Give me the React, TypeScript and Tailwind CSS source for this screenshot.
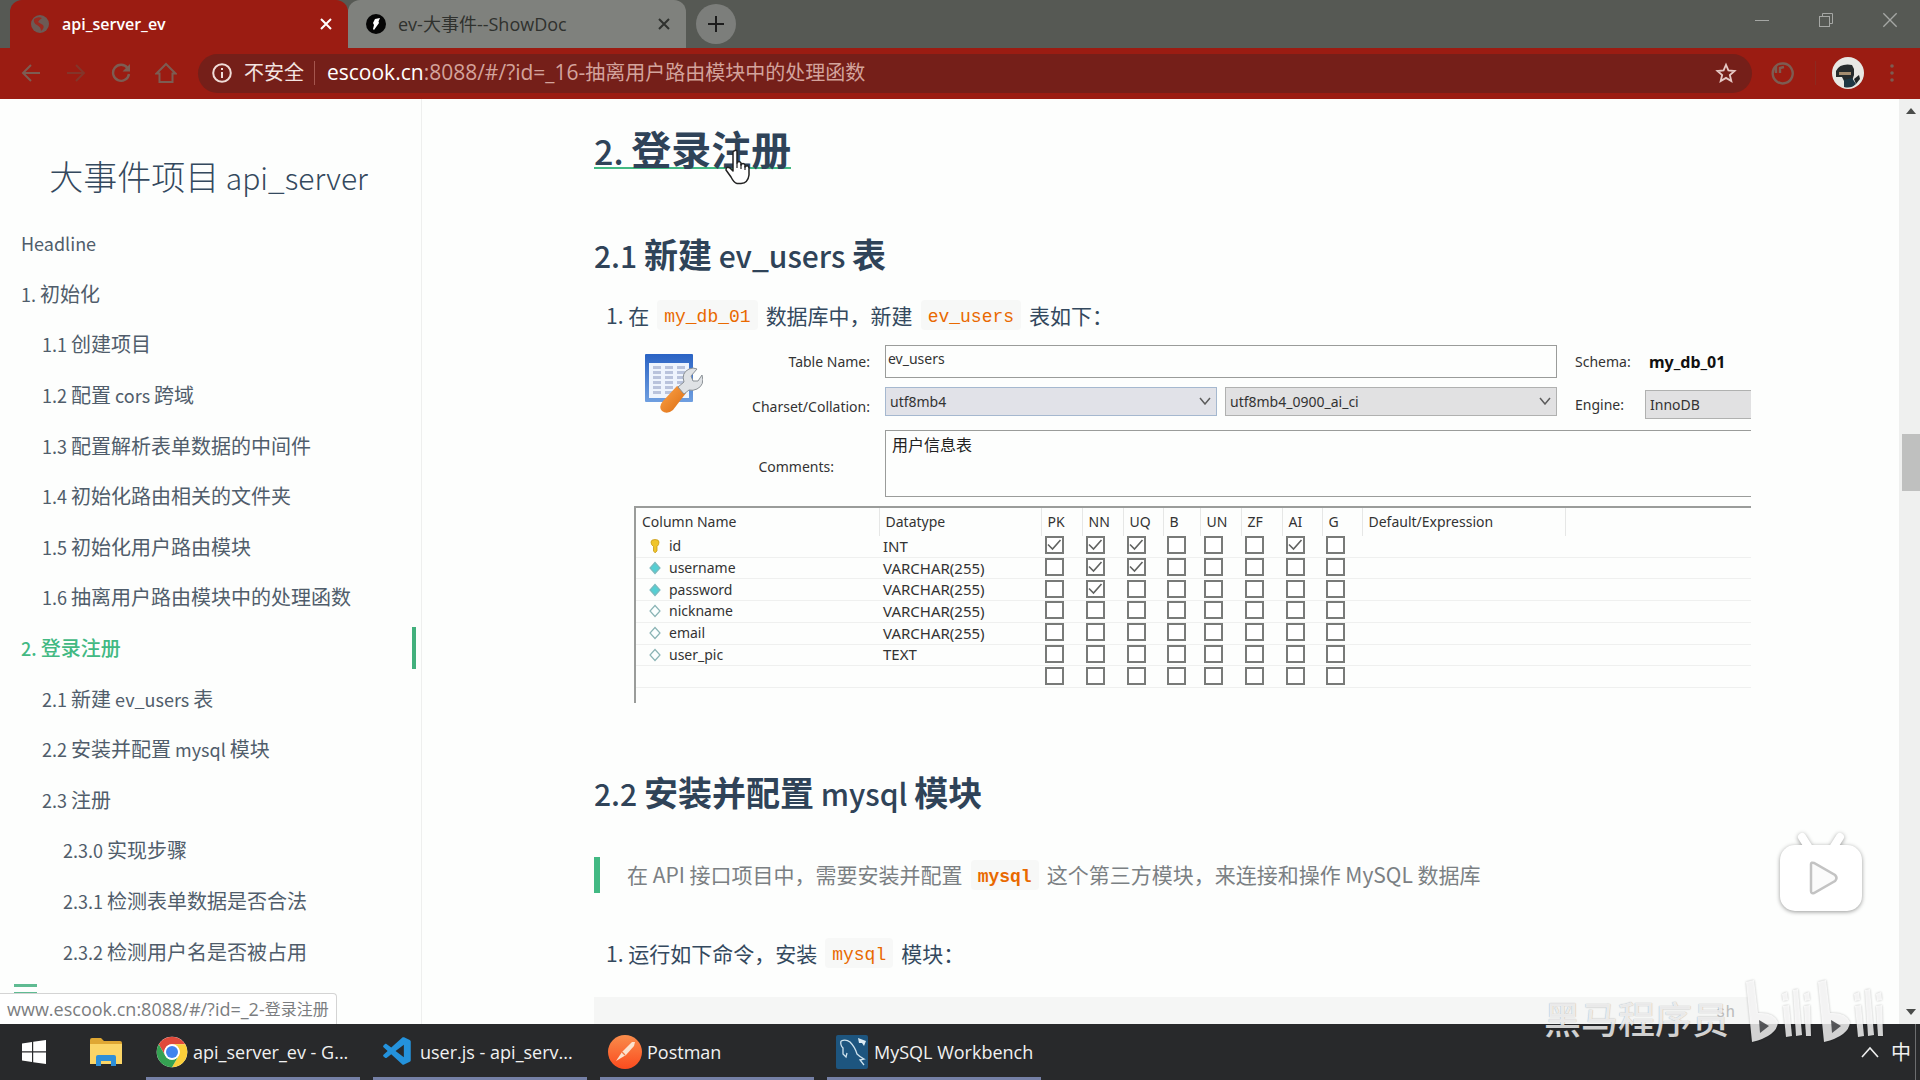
import React from "react";
import { VscVscode } from "react-icons/vsc";

const DOC = "font-['Noto_Sans_CJK_SC',sans-serif]";
const UI = "font-['Open_Sans','Noto_Sans_CJK_SC',sans-serif]";
const TABLE = "font-['Noto_Sans','Noto_Sans_CJK_SC',sans-serif]";

const NAV: { text: string; level: number; active?: boolean }[] = [
  { text: "Headline", level: 0 },
  { text: "1. 初始化", level: 0 },
  { text: "1.1 创建项目", level: 1 },
  { text: "1.2 配置 cors 跨域", level: 1 },
  { text: "1.3 配置解析表单数据的中间件", level: 1 },
  { text: "1.4 初始化路由相关的文件夹", level: 1 },
  { text: "1.5 初始化用户路由模块", level: 1 },
  { text: "1.6 抽离用户路由模块中的处理函数", level: 1 },
  { text: "2. 登录注册", level: 0, active: true },
  { text: "2.1 新建 ev_users 表", level: 1 },
  { text: "2.2 安装并配置 mysql 模块", level: 1 },
  { text: "2.3 注册", level: 1 },
  { text: "2.3.0 实现步骤", level: 2 },
  { text: "2.3.1 检测表单数据是否合法", level: 2 },
  { text: "2.3.2 检测用户名是否被占用", level: 2 },
];

const INDENT = ["pl-[21px]", "pl-[42px]", "pl-[63px]"];

const FLAGS = ["PK", "NN", "UQ", "B", "UN", "ZF", "AI", "G"];

const ROWS: { name: string; type: string; icon: "key" | "full" | "empty" | "none"; on: string[] }[] = [
  { name: "id", type: "INT", icon: "key", on: ["PK", "NN", "UQ", "AI"] },
  { name: "username", type: "VARCHAR(255)", icon: "full", on: ["NN", "UQ"] },
  { name: "password", type: "VARCHAR(255)", icon: "full", on: ["NN"] },
  { name: "nickname", type: "VARCHAR(255)", icon: "empty", on: [] },
  { name: "email", type: "VARCHAR(255)", icon: "empty", on: [] },
  { name: "user_pic", type: "TEXT", icon: "empty", on: [] },
  { name: "", type: "", icon: "none", on: [] },
];

/* Sets the Latin runs of a mixed Chinese/Latin string in their own style. */
function Mixed({ text, latin }: { text: string; latin: string }) {
  return (
    <>
      {text.split(/([\x20-\x7e]+)/).map((part, i) =>
        i % 2 === 1 ? (
          <span key={i} className={latin}>{part}</span>
        ) : (
          part
        )
      )}
    </>
  );
}

function CloseIcon({ className }: { className: string }) {
  return (
    <svg viewBox="0 0 12 12" className={className} fill="none" stroke="currentColor">
      <path d="M1 1 L11 11 M11 1 L1 11" />
    </svg>
  );
}

function TabStrip() {
  return (
    <div className="flex h-12 items-stretch bg-[#565954]">
      <div className="ml-2.5 flex w-[338px] shrink-0 items-center rounded-t-xl bg-[#9b1c12] pl-5 pr-3 text-white">
        <svg viewBox="0 0 20 20" className="size-5 shrink-0">
          <circle cx="10" cy="10" r="9" fill="#6d5a55" />
          <path d="M4 5 Q8 2 12 4 Q9 6 8 8 L13 11 Q15 14 11 17 Q11 13 7 11 Q3 9 4 5Z" fill="#9b2a20" />
        </svg>
        <span className="ml-3 flex-1 text-base font-semibold">api_server_ev</span>
        <button aria-label="关闭 api_server_ev" className="grid size-5 place-items-center">
          <CloseIcon className="size-3 stroke-2" />
        </button>
      </div>
      <div className="flex w-[338px] shrink-0 items-center rounded-t-xl bg-[#7f817d] pl-[18px] pr-3 text-[#2f312e]">
        <svg viewBox="0 0 20 20" className="size-5 shrink-0">
          <circle cx="10" cy="10" r="10" fill="#050505" />
          <path d="M9 5 L14 4 L12.5 7.5 L13 9 L8 16 L7 15 L8 11 L7 9Z" fill="#fff" />
        </svg>
        <span className="ml-3 flex-1 text-lg">ev-大事件--ShowDoc</span>
        <button aria-label="关闭 ShowDoc" className="grid size-5 place-items-center">
          <CloseIcon className="size-3 stroke-2" />
        </button>
      </div>
      <button aria-label="新标签页" className="mx-2.5 mt-1 grid size-10 place-items-center rounded-full bg-[#7c7e7b] text-[#1c1c1c]">
        <svg viewBox="0 0 16 16" className="size-4" stroke="currentColor" strokeWidth="2">
          <path d="M8 0 V16 M0 8 H16" />
        </svg>
      </button>
      <div className="-mr-0.5 ml-auto flex items-start pt-2.5 text-[#a5a7a4]">
        <button aria-label="最小化" className="grid h-5 w-16 place-items-center">
          <svg viewBox="0 0 14 14" className="size-3.5" stroke="currentColor" fill="none">
            <path d="M0 7.5 H14" />
          </svg>
        </button>
        <button aria-label="还原" className="grid h-5 w-16 place-items-center">
          <svg viewBox="0 0 16 16" className="size-4" stroke="currentColor" fill="none">
            <rect x="1.5" y="4.5" width="10" height="10" />
            <path d="M4.5 4.5 V1.5 H14.5 V11.5 H11.5" />
          </svg>
        </button>
        <button aria-label="关闭" className="grid h-5 w-16 place-items-center">
          <CloseIcon className="size-4" />
        </button>
      </div>
    </div>
  );
}

function Toolbar() {
  const nav = "grid size-6 place-items-center";
  return (
    <div className="flex h-[51px] items-center bg-[#9b1c12] pb-px text-[#7d5c52]">
      <div className="flex w-[198px] shrink-0 items-center gap-[21px] pl-[19px]">
        <button aria-label="后退" className={nav}>
          <svg viewBox="0 0 20 20" className="size-5" fill="none" stroke="currentColor" strokeWidth="2">
            <path d="M19 10 H2 M10 2 L2 10 L10 18" />
          </svg>
        </button>
        <button aria-label="前进" className={`${nav} text-[#84352a]`}>
          <svg viewBox="0 0 20 20" className="size-5" fill="none" stroke="currentColor" strokeWidth="2">
            <path d="M1 10 H18 M10 2 L18 10 L10 18" />
          </svg>
        </button>
        <button aria-label="刷新" className={nav}>
          <svg viewBox="0 0 20 20" className="size-5" fill="none" stroke="currentColor" strokeWidth="2.4">
            <path d="M16.5 5 A8 8 0 1 0 18 11" />
            <path d="M19 1 V8.5 H11.5Z" fill="currentColor" stroke="none" />
          </svg>
        </button>
        <button aria-label="主页" className={nav}>
          <svg viewBox="0 0 22 22" className="size-[22px]" fill="none" stroke="currentColor" strokeWidth="2">
            <path d="M1.5 11.5 L11 2 L20.5 11.5 H17.5 V20 H4.5 V11.5Z" />
          </svg>
        </button>
      </div>
      <div className="flex h-[39px] min-w-0 flex-1 items-center rounded-full bg-[#751f19] pl-3.5 pr-3.5 text-lg">
        <svg viewBox="0 0 20 20" className="size-5 shrink-0" fill="none" stroke="#f0dcd8" strokeWidth="2">
          <circle cx="10" cy="10" r="8.8" />
          <path d="M10 9 V15 M10 5 V7" />
        </svg>
        <span className="ml-3 text-xl text-[#f3e4e1]">不安全</span>
        <span className="ml-2.5 mr-3 h-6 w-px bg-[#a5564e]" />
        <div role="textbox" aria-label="地址" className="flex-1 truncate text-xl text-[#d3a39c]">
          <span className="text-[21px] text-white">escook.cn</span>
          <Mixed text=":8088/#/?id=_16-抽离用户路由模块中的处理函数" latin="text-[21px]" />
        </div>
        <button aria-label="收藏" className="grid size-6 place-items-center text-[#e6c9c5]">
          <svg viewBox="0 0 24 24" className="size-[22px]" fill="none" stroke="currentColor" strokeWidth="2">
            <path d="M12 3 L14.6 9.2 L21.3 9.8 L16.2 14.2 L17.8 20.8 L12 17.3 L6.2 20.8 L7.8 14.2 L2.7 9.8 L9.4 9.2Z" />
          </svg>
        </button>
      </div>
      <div className="flex w-[168px] shrink-0 items-center pl-[19px]">
        <button aria-label="扩展程序" className="grid size-6 place-items-center">
          <svg viewBox="0 0 24 24" className="size-6" fill="none" stroke="currentColor" strokeWidth="2.4">
            <path d="M5 5 A10 10 0 1 0 13 2.5 M13 2.5 Q7 2 5 5 V12 M9 12 V7 L13 6" />
          </svg>
        </button>
        <span className="ml-5 h-6 w-px bg-[#8c2a20]" />
        <button aria-label="用户" className="ml-4 grid size-8 place-items-center">
          <svg viewBox="0 0 32 32" className="size-8">
            <circle cx="16" cy="16" r="16" fill="#e8e8e4" />
            <path d="M4 14 Q8 6 20 8 L22 12 V18 L20 24 L12 24 L10 20 H4Z" fill="#262b2c" />
            <path d="M7 15 H19 V18 H7Z" fill="#a58d6f" />
            <path d="M12 23 L20 21 L24 27 Q19 32 12 30Z" fill="#1d3744" />
            <path d="M22 22 L27 18 L28 22 L24 27Z" fill="#1f2526" />
          </svg>
        </button>
        <button aria-label="菜单" className="ml-auto mr-4 grid size-6 place-items-center">
          <svg viewBox="0 0 4 20" className="h-5 w-1" fill="currentColor">
            <circle cx="2" cy="3" r="1.8" />
            <circle cx="2" cy="10" r="1.8" />
            <circle cx="2" cy="17" r="1.8" />
          </svg>
        </button>
      </div>
    </div>
  );
}

function Sidebar() {
  return (
    <aside className="relative flex w-[422px] shrink-0 flex-col border-r border-[#eeefee] pb-[47px] text-[#505d6b]">
      <h1 className="pr-1 pt-[53px] text-center text-[34px] font-light leading-[48px] text-[#34495e]">
        <a href="#/">
          <Mixed text="大事件项目 api_server" latin="text-[30px]" />
        </a>
      </h1>
      <nav className="mt-[17px] min-h-0 flex-1">
        <ul className="flex h-full flex-col text-xl">
          {NAV.map((item) => (
            <li
              key={item.text}
              className={`flex flex-1 items-center ${INDENT[item.level]} ${item.active ? "font-medium text-[#42b983]" : ""}`}
            >
              <a href={`#/?id=${item.text}`} className="flex-1 leading-none">
                <Mixed text={item.text} latin="text-lg leading-none" />
              </a>
              {item.active && <span className="mr-[5px] h-[42px] w-1 bg-[#42b07c]" />}
            </li>
          ))}
        </ul>
      </nav>
      <button aria-label="切换侧边栏" className="absolute bottom-[29px] left-3.5 flex flex-col gap-[5px]">
        <span className="h-[3px] w-[23px] bg-[#5fbb92]" />
        <span className="h-[3px] w-[23px] bg-[#5fbb92]" />
      </button>
      <div className={`${UI} absolute bottom-0 left-0 flex h-[31px] w-[337px] items-center whitespace-pre rounded-tr border-r border-t border-[#d4d4d4] bg-white pl-[7px] text-base text-[#7b7d80]`}>
        <Mixed text="www.escook.cn:8088/#/?id=_2-登录注册" latin="text-lg" />
      </div>
    </aside>
  );
}

function Code({ children }: { children: React.ReactNode }) {
  return (
    <code className="mx-2 inline-block h-[30px] rounded-sm bg-[#f7f8f7] px-[7px] pt-1 font-['Liberation_Mono',monospace] text-lg leading-[26px] text-[#e96900]">
      {children}
    </code>
  );
}

function TableToolIcon() {
  return (
    <svg viewBox="0 0 58 60" className="ml-2.5 mt-2 h-[60px] w-[58px]">
      <defs>
        <linearGradient id="frame" x1="0" y1="0" x2="0" y2="1">
          <stop offset="0" stopColor="#2a63c4" />
          <stop offset="1" stopColor="#6f9fe0" />
        </linearGradient>
        <linearGradient id="handle" x1="0" y1="0" x2="1" y2="1">
          <stop offset="0" stopColor="#ffa64a" />
          <stop offset="1" stopColor="#d96a10" />
        </linearGradient>
      </defs>
      <rect x="0" y="1" width="48" height="48" rx="1" fill="url(#frame)" />
      <rect x="4" y="10" width="40" height="35" fill="#eef4fd" />
      {[8, 20, 32].map((x) =>
        [13, 18, 23, 28, 33, 38].map((y) => <rect key={`${x}-${y}`} x={x} y={y} width="8" height="3" fill="#b9c3dc" />)
      )}
      <path d="M18 48 L32 33 L41 40 L28 57 Q22 62 17 58 Q13 54 18 48Z" fill="url(#handle)" />
      <path
        d="M33 34 L39 29 Q36 20 44 16 Q48 14 52 16 L46 23 L48 28 L53 28 L57 22 Q60 32 52 36 Q48 38 44 37 L39 41Z"
        fill="#dfe2e5"
        stroke="#8b9196"
        strokeWidth="1"
      />
    </svg>
  );
}

function Combo({ id, value, tone, chevron }: { id: string; value: string; tone: string; chevron: boolean }) {
  return (
    <div className="relative min-w-0 flex-1">
      <select id={id} aria-label={id} className={`h-[29px] w-full appearance-none border pl-1 text-sm outline-none ${tone}`}>
        <option>{value}</option>
      </select>
      {chevron && (
        <svg viewBox="0 0 12 8" className="pointer-events-none absolute right-1.5 top-2.5 h-2 w-3" fill="none" stroke="#5c5c5c" strokeWidth="1.5">
          <path d="M1 1 L6 7 L11 1" />
        </svg>
      )}
    </div>
  );
}

function RowIcon({ kind }: { kind: "key" | "full" | "empty" | "none" }) {
  if (kind === "none") return null;
  if (kind === "key") {
    return (
      <svg viewBox="0 0 12 14" className="h-3.5 w-3">
        <path d="M2 3 Q2 0.5 6 0.5 Q10 0.5 10 3 Q10 6 8 7.5 V12 L6 13.8 L4.5 12 V7.5 Q2 6 2 3Z" fill="#efc52c" stroke="#c99a13" strokeWidth="0.8" />
      </svg>
    );
  }
  return (
    <svg viewBox="0 0 12 14" className="h-3.5 w-3">
      <path
        d="M6 1.5 L11 7 L6 12.5 L1 7Z"
        fill={kind === "full" ? "#55cfd3" : "#fbffff"}
        stroke={kind === "full" ? "#7ab9bd" : "#8ab4b5"}
        strokeWidth="1.2"
      />
    </svg>
  );
}

function Tick({ label, checked }: { label: string; checked: boolean }) {
  return (
    <span className="relative block h-[18px] w-[19px]">
      <input
        type="checkbox"
        aria-label={label}
        defaultChecked={checked}
        className="peer block h-[18px] w-[19px] appearance-none border-2 border-[#787a78] bg-white"
      />
      <svg viewBox="0 0 18 18" className="pointer-events-none absolute inset-0 hidden size-[18px] peer-checked:block" fill="none" stroke="#606260" strokeWidth="1.6">
        <path d="M3 8.5 L7.5 13 L15.5 4" />
      </svg>
    </span>
  );
}

function SchemaEditor() {
  const line = "border-[#9a9c9a]";
  return (
    <section className={`${TABLE} ml-10 mt-[15px] overflow-hidden text-sm text-[#333]`}>
      <div className="grid grid-cols-[94px_126px_672px_minmax(0,1fr)] gap-x-[15px] pl-px">
        <div className="row-span-2">
          <TableToolIcon />
        </div>
        <label htmlFor="table-name" className="self-center text-right">Table Name:</label>
        <input id="table-name" defaultValue="ev_users" className={`h-[33px] border pb-1.5 pl-0.5 outline-none ${line}`} />
        <div className="flex items-center pl-[3px]">
          <span className="w-[74px]">Schema:</span>
          <b className="text-base text-[#111]">my_db_01</b>
        </div>
        <label htmlFor="Charset" className="mt-2 self-center pt-2 text-right">Charset/Collation:</label>
        <div className="mt-[9px] flex gap-2">
          <Combo id="Charset" value="utf8mb4" tone="border-[#a5b8cf] bg-[#e1e2e8]" chevron />
          <Combo id="Collation" value="utf8mb4_0900_ai_ci" tone="border-[#b0b1b0] bg-[#e1e1e2]" chevron />
        </div>
        <div className="mt-3 flex items-center pl-[3px]">
          <label htmlFor="Engine" className="w-[70px]">Engine:</label>
          <Combo id="Engine" value="InnoDB" tone="border-r-0 border-[#b0b1b0] bg-[#e1e1e2]" chevron={false} />
        </div>
        <label htmlFor="comments" className="col-span-2 mt-3 self-center pr-9 pt-1.5 text-right">Comments:</label>
        <textarea
          id="comments"
          defaultValue="用户信息表"
          className={`col-span-2 mt-[11px] block h-[67px] resize-none border border-r-0 px-1.5 pt-0.5 text-base text-[#222] outline-none ${line}`}
        />
      </div>
      <div className={`mt-[9px] h-[197px] border-l-2 border-t-2 ${line}`}>
        <table className="h-[180px] w-full table-fixed border-collapse">
          <colgroup>
            <col className="w-[243px]" />
            <col className="w-[162px]" />
            <col className="w-[41px]" />
            <col className="w-[41px]" />
            <col className="w-[40px]" />
            <col className="w-[37px]" />
            <col className="w-[41px]" />
            <col className="w-[41px]" />
            <col className="w-[40px]" />
            <col className="w-[40px]" />
            <col className="w-[203px]" />
            <col />
          </colgroup>
          <thead>
            <tr className="h-7 text-left">
              <th className="border-r border-[#e6e7e6] pl-1.5 font-normal">Column Name</th>
              <th className="border-r border-[#e6e7e6] pl-1.5 font-normal">Datatype</th>
              {FLAGS.map((f) => (
                <th key={f} className="border-r border-[#e6e7e6] pl-1.5 font-normal">{f}</th>
              ))}
              <th className="border-r border-[#e6e7e6] pl-1.5 font-normal">Default/Expression</th>
              <th />
            </tr>
          </thead>
          <tbody>
            {ROWS.map((row, i) => (
              <tr key={i} className="border-b border-[#eff0ef] leading-none">
                <td className="p-0 pl-[13px]">
                  <span className="flex items-center gap-2">
                    <RowIcon kind={row.icon} />
                    {row.name}
                  </span>
                </td>
                <td className="p-0 pl-1 text-[15px] leading-none">{row.type}</td>
                {FLAGS.map((f) => (
                  <td key={f} className="p-0 pb-0.5 pl-1">
                    <Tick label={`${row.name} ${f}`} checked={row.on.includes(f)} />
                  </td>
                ))}
                <td />
                <td />
              </tr>
            ))}
          </tbody>
        </table>
      </div>
    </section>
  );
}

function HandCursor() {
  return (
    <svg viewBox="0 0 26 36" className="absolute left-[131px] top-5 h-9 w-[26px]">
      <path
        d="M9 2 Q12 0 12 3 V14 Q14 11 16 14 V16 Q18 13 20 16 V18 Q23 15 24 19 V26 Q23 34 16 34.5 H12 Q9 34 6 28 L1 21 Q1 17 5 19 L8 22 V3Z"
        fill="#fff"
        stroke="#222"
        strokeWidth="1.5"
        strokeLinejoin="round"
      />
      <path d="M12 14 V19 M16 15 V20 M20 17 V21" stroke="#222" strokeWidth="1.2" />
    </svg>
  );
}

function Article() {
  const h2 = "text-[34px] font-bold leading-10 text-[#2f4358]";
  return (
    <main className="min-w-0 flex-1 overflow-hidden pl-[172px] pr-[148px] text-[21px] leading-[30px] text-[#34495e]">
      <h1 className="relative pt-[34px] text-[40px] font-bold text-[#2f4358]">
        <a href="#/?id=_2" className="inline-block border-b-2 border-[#42b983] pb-px leading-[30px]">
          <Mixed text="2. 登录注册" latin="text-[34px] font-medium leading-[30px]" />
        </a>
        <span className="absolute left-0 top-[30px]">
          <HandCursor />
        </span>
      </h1>
      <h2 className={`mt-[65px] ${h2}`}>
        <Mixed text="2.1 新建 ev_users 表" latin="text-[30px] font-medium leading-10" />
      </h2>
      <p className="mt-[25px] flex pl-3">
        <span>1. 在</span>
        <Code>my_db_01</Code>
        <span>数据库中，新建</span>
        <Code>ev_users</Code>
        <span>表如下：</span>
      </p>
      <SchemaEditor />
      <h2 className={`mt-[69px] ${h2}`}>
        <Mixed text="2.2 安装并配置 mysql 模块" latin="text-[30px] font-medium leading-10" />
      </h2>
      <blockquote className="mt-11 flex h-9 items-center border-l-[6px] border-[#42b983] pb-0.5 pl-[27px] text-[#7b8083]">
        <span>在 API 接口项目中，需要安装并配置</span>
        <b>
          <Code>mysql</Code>
        </b>
        <span>这个第三方模块，来连接和操作 MySQL 数据库</span>
      </blockquote>
      <p className="mt-[45px] flex pl-3">
        <span>1. 运行如下命令，安装</span>
        <Code>mysql</Code>
        <span>模块：</span>
      </p>
      <pre className="mt-[29px] h-40 bg-[#f5f6f5] pr-4 pt-1 text-right text-base text-[#bbb]">sh</pre>
    </main>
  );
}

function Scrollbar() {
  return (
    <div className="flex w-[21px] shrink-0 flex-col items-center bg-[#eff0ef] py-2">
      <svg viewBox="0 0 10 8" className="ml-0.5 h-2 w-2.5" fill="#4a4c4a">
        <path d="M5 1 L10 7 H0Z" />
      </svg>
      <div className="ml-[3px] mt-[319px] h-[57px] w-[18px] bg-[#bfc0bf]" />
      <svg viewBox="0 0 10 8" className="ml-0.5 mt-auto h-2 w-2.5" fill="#4a4c4a">
        <path d="M0 1 H10 L5 7Z" />
      </svg>
    </div>
  );
}

function PlayerBadge() {
  return (
    <svg viewBox="0 0 100 100" className="absolute bottom-[102px] right-[49px] size-[100px] drop-shadow-[0_1px_2px_rgba(0,0,0,0.4)]">
      <path d="M31 15 L38 26 M69 15 L62 26" stroke="#fff" strokeWidth="8" strokeLinecap="round" />
      <rect x="9" y="23" width="82" height="66" rx="15" fill="#fff" />
      <path d="M40 42 Q40 40 43 41 L64 53 Q67 56 64 59 L43 71 Q40 72 40 69Z" fill="#fbfbfb" stroke="#c3c3c3" strokeWidth="2.5" />
    </svg>
  );
}

function BiliMark() {
  const half = (
    <g>
      <path d="M1 2 L9 0 L13 33 Q29 32 33 42 Q32 56 7 62Z" />
      <path d="M14 40 L24 46 L15 53Z" fill="#333538" />
      <path d="M38 26 L44 25 L47 56 L41 57Z" />
      <path d="M48 10 L53 9 L57 55 L51 56Z" />
      <path d="M59 26 L65 25 L66 56 L61 56Z" />
      <path d="M37 14 L42 12 L43 20 L38 21Z M59 14 L64 12 L65 20 L60 21Z" />
    </g>
  );
  return (
    <svg viewBox="0 0 142 64" className="h-16 w-[142px] drop-shadow-[0_0_1px_rgba(0,0,0,0.3)]" fill="#fff" fillOpacity="0.8">
      {half}
      <g transform="translate(72 0)">{half}</g>
    </svg>
  );
}

function Watermark() {
  return (
    <div className="pointer-events-none absolute -bottom-5 right-[33px] flex items-end gap-4">
      <span className="pb-1 text-[37px] font-medium leading-[44px] text-white/80 [text-shadow:0_0_1px_rgba(0,0,0,0.4)]">黑马程序员</span>
      <BiliMark />
    </div>
  );
}

function TaskItem({ label, children }: { label: string; children: React.ReactNode }) {
  return (
    <button className="flex w-[214px] items-center gap-[5px] border-b-[3px] border-[#7580a6] pl-2 pt-[3px] text-left">
      {children}
      <span className="whitespace-nowrap">{label}</span>
    </button>
  );
}

function Taskbar() {
  return (
    <footer className={`${UI} flex h-14 shrink-0 items-stretch bg-[#28292b] text-lg text-[#f1f1f1]`}>
      <button aria-label="开始" className="ml-[22px] grid w-6 place-items-center">
        <svg viewBox="0 0 24 24" className="size-6" fill="#fff">
          <path d="M0 3.5 L10 2 V11.3 H0Z M11.2 1.8 L24 0 V11.3 H11.2Z M0 12.6 H10 V22 L0 20.5Z M11.2 12.6 H24 V24 L11.2 22.2Z" />
        </svg>
      </button>
      <button aria-label="文件资源管理器" className="ml-11 grid w-8 place-items-center">
        <svg viewBox="0 0 32 28" className="h-7 w-8">
          <path d="M0 2 Q0 0 2 0 H11 L14 3 H30 Q32 3 32 5 V26 H0Z" fill="#dfa733" />
          <path d="M0 6 H32 V26 H0Z" fill="#fbd567" />
          <path d="M6 28 V19 Q6 17 8 17 H24 Q26 17 26 19 V28 H21 V23 H11 V28Z" fill="#2e8fd8" />
        </svg>
      </button>
      <div className="ml-6 flex gap-[13px]">
        <TaskItem label="api_server_ev - G...">
          <svg viewBox="0 0 48 48" className="ml-0.5 size-8 shrink-0">
            <circle cx="24" cy="24" r="23" fill="#fff" />
            <path d="M4.1 12.5 A23 23 0 0 1 43.9 12.5 H24 A11.5 11.5 0 0 0 14 29.8Z" fill="#e04a3b" />
            <path d="M43.9 12.5 A23 23 0 0 1 24 47 L34 29.8 A11.5 11.5 0 0 0 24 12.5Z" fill="#fbcf3a" />
            <path d="M24 47 A23 23 0 0 1 4.1 12.5 L14 29.8 A11.5 11.5 0 0 0 34 29.8Z" fill="#35a152" />
            <circle cx="24" cy="24" r="11.5" fill="#fff" />
            <circle cx="24" cy="24" r="9" fill="#4184ee" />
          </svg>
        </TaskItem>
        <TaskItem label="user.js - api_serv...">
          <VscVscode className="size-[34px] shrink-0 text-[#2492dc]" />
        </TaskItem>
        <TaskItem label="Postman">
          <svg viewBox="0 0 34 34" className="size-[34px] shrink-0">
            <defs>
              <linearGradient id="pm" x1="0" y1="0" x2="0" y2="1">
                <stop offset="0" stopColor="#f98d4c" />
                <stop offset="1" stopColor="#fb4b1e" />
              </linearGradient>
            </defs>
            <circle cx="17" cy="17" r="17" fill="url(#pm)" />
            <path d="M8 26 L14 17 L24 7 L27 7 L26 11 L18 20Z" fill="#fbe3cf" />
            <path d="M14 17 L17 20" stroke="#f07a45" strokeWidth="1.2" />
          </svg>
        </TaskItem>
        <TaskItem label="MySQL Workbench">
          <svg viewBox="0 0 34 34" className="size-[34px] shrink-0">
            <rect x="1" y="0" width="32" height="34" rx="2" fill="#1d557f" />
            <path
              d="M6 6 Q11 4 15 7 Q20 12 22 19 Q25 22 29 24 L25 25 L29 30 M6 6 Q5 10 8 13 L8 19 L11 22 L12 18"
              fill="none"
              stroke="#cfe3ee"
              strokeWidth="1.3"
            />
            <path d="M23 3 L31 6 L29 11 L27 8 L24 8Z" fill="#dcebf4" />
          </svg>
        </TaskItem>
      </div>
      <div className="ml-auto flex items-center gap-2">
        <button aria-label="显示隐藏的图标" className="mr-1">
          <svg viewBox="0 0 18 12" className="h-3 w-[18px]" fill="none" stroke="#eee" strokeWidth="1.6">
            <path d="M1 11 L9 2 L17 11" />
          </svg>
        </button>
        <button className={`${DOC} text-xl`}>中</button>
        <span className="-ml-1 mr-1 h-full w-px bg-[#6c6d6f]" />
      </div>
    </footer>
  );
}

export default function App() {
  return (
    <div className={`${DOC} flex h-screen flex-col overflow-hidden bg-[#fdfefd]`}>
      <header className={`${UI} shrink-0`}>
        <TabStrip />
        <Toolbar />
      </header>
      <div className="relative flex min-h-0 flex-1">
        <Sidebar />
        <Article />
        <Scrollbar />
        <PlayerBadge />
        <Watermark />
      </div>
      <Taskbar />
    </div>
  );
}
